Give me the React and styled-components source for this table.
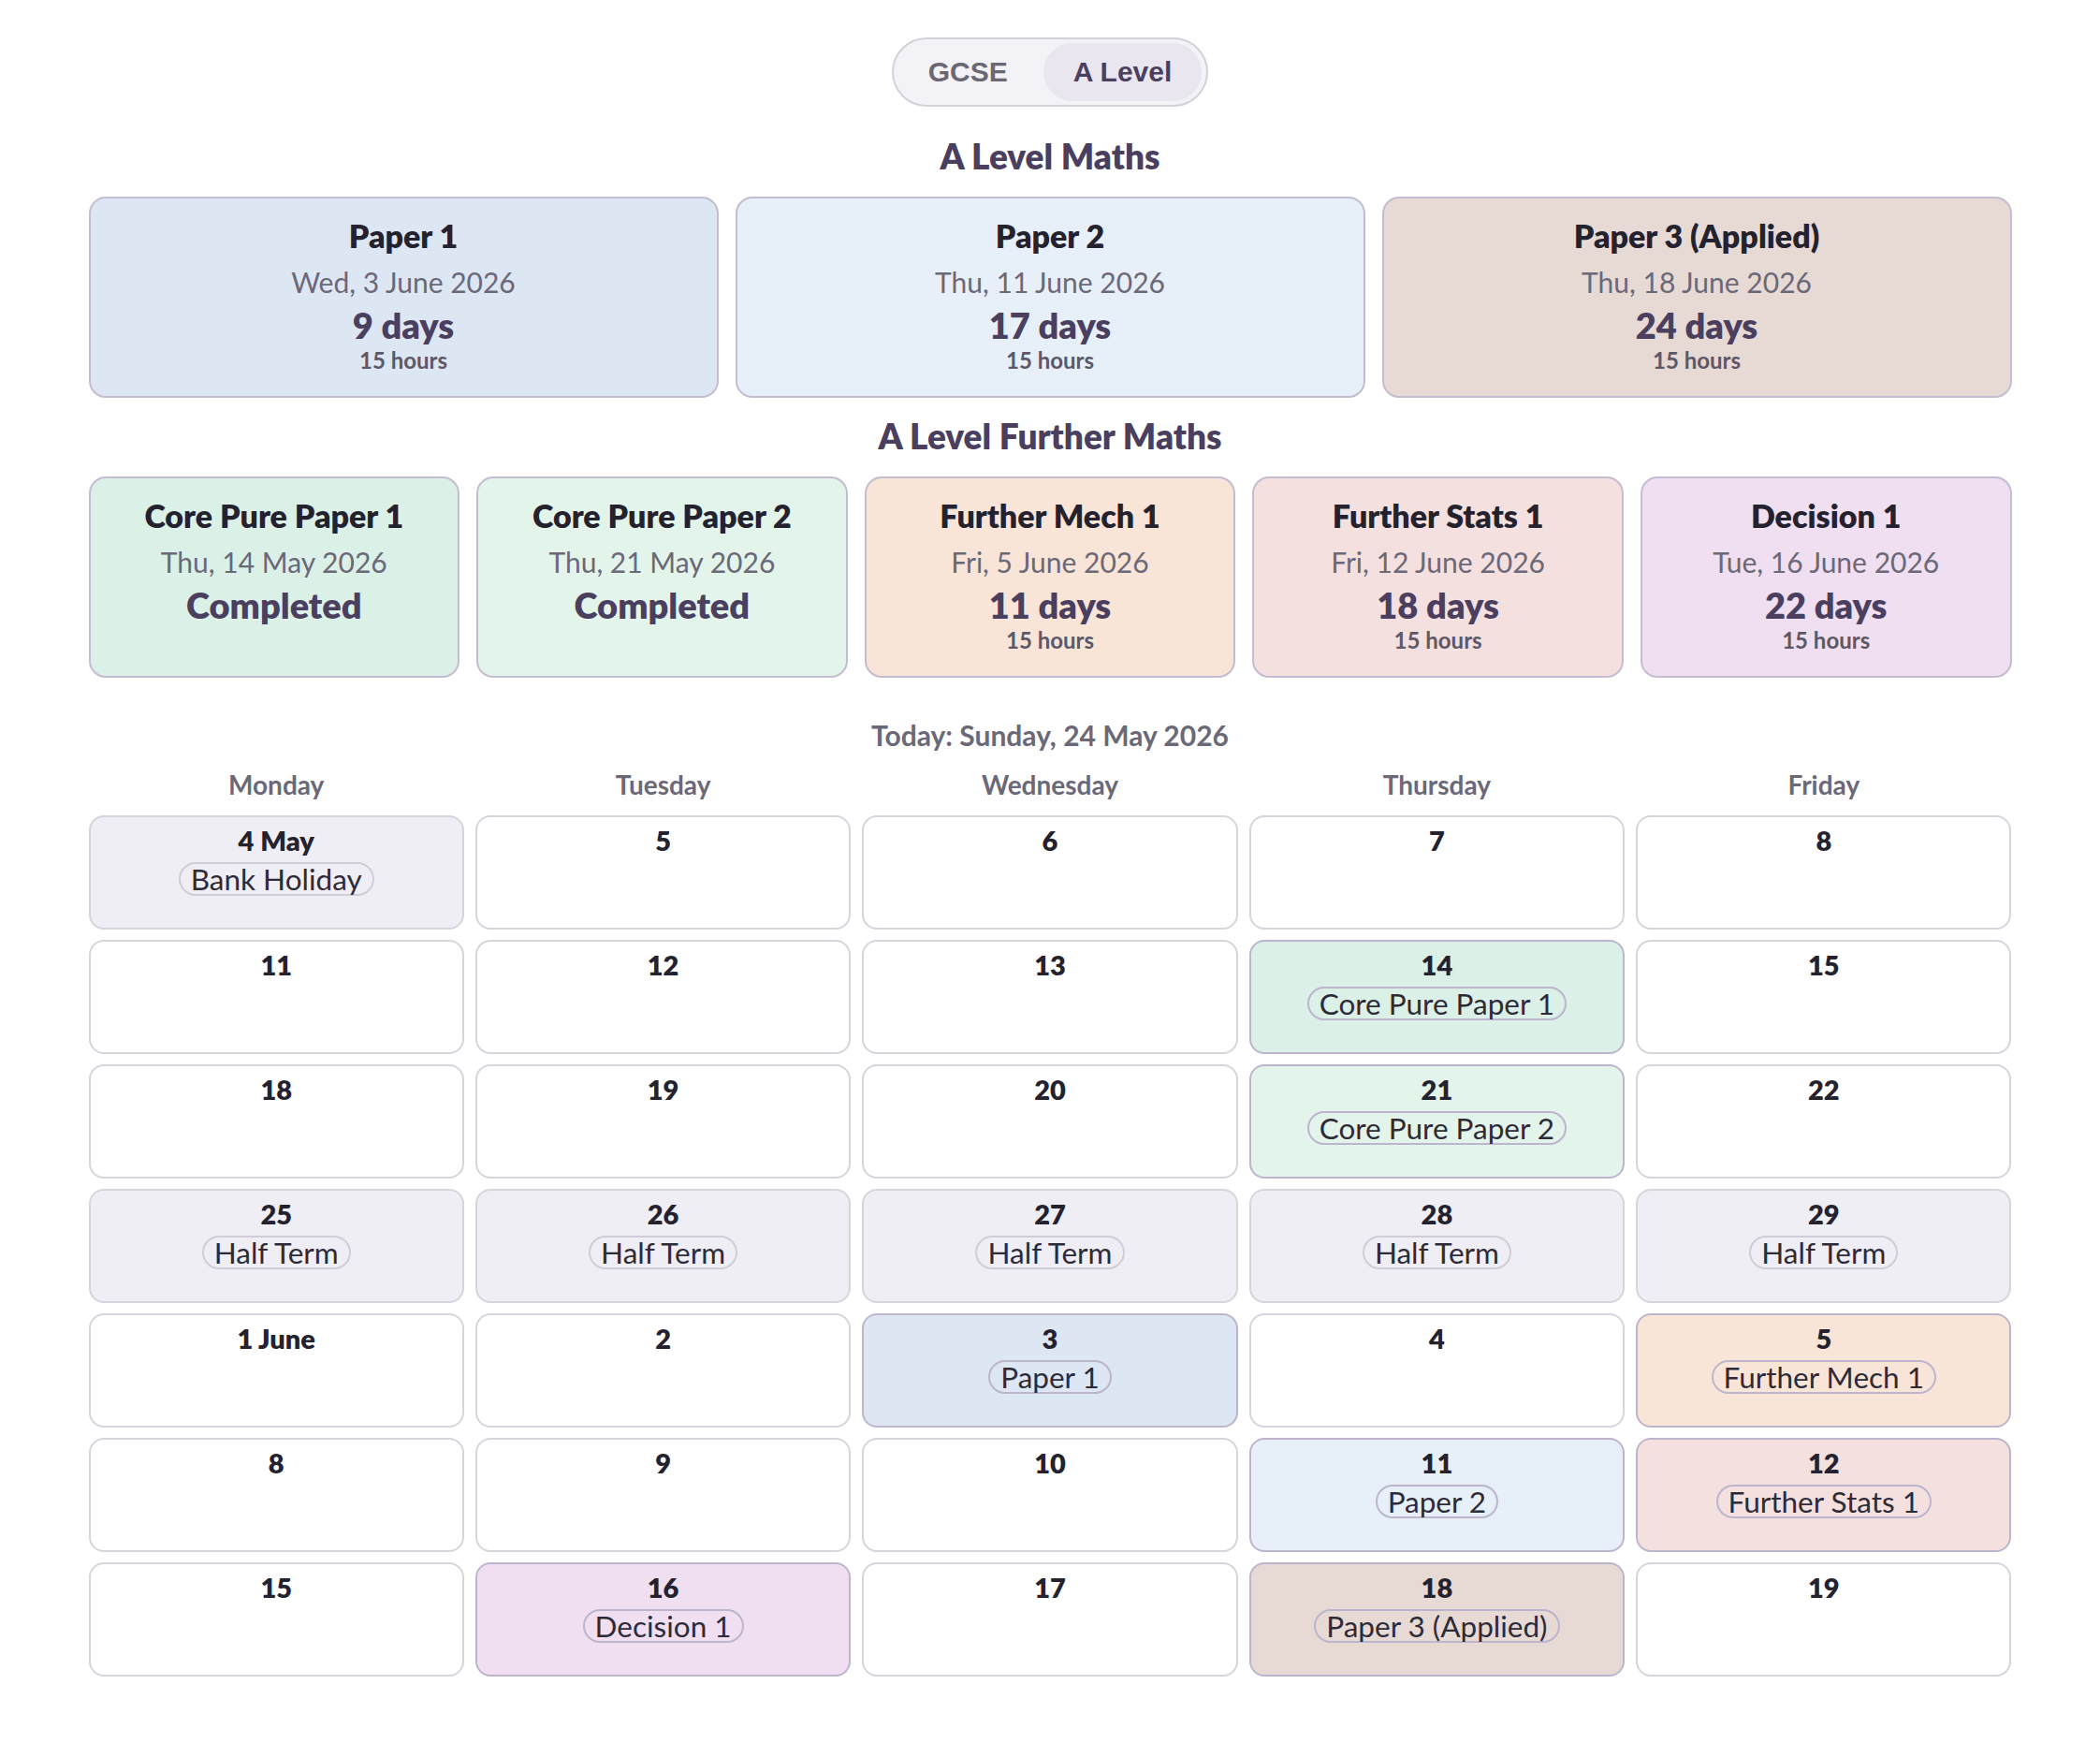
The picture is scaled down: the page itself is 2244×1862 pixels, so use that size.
import React from "react";
import styled, { createGlobalStyle } from "styled-components";

const Global = createGlobalStyle`
  html, body { margin: 0; padding: 0; background: #ffffff; }
  body { font-family: Lato, "Noto Sans", sans-serif; color: #24222e; }
`;

const Page = styled.div`
  width: 2055px;
  margin: 0 auto;
  padding-top: 40px;
  padding-bottom: 70px;
  display: flex;
  flex-direction: column;
  align-items: center;
`;

const Toggle = styled.div`
  display: flex;
  gap: 6px;
  padding: 4px 5px;
  border: 2px solid #d3d1da;
  border-radius: 999px;
  background: #f3f2f7;
`;

const ToggleButton = styled.button`
  font-family: "Liberation Sans", Arial, sans-serif;
  font-weight: 700;
  font-size: 30px;
  height: 62px;
  padding: 0 32px;
  border: none;
  border-radius: 999px;
  background: ${(p) => (p.$active ? "#e9e6f0" : "transparent")};
  color: ${(p) => (p.$active ? "#4a3f5f" : "#6a6673")};
  cursor: pointer;
`;

const Heading = styled.h2`
  margin: ${(p) => p.$mt}px 0 0;
  font-size: 37px;
  line-height: 40px;
  font-weight: 800;
  color: #4a3f5f;
  text-align: center;
`;

const CardRow = styled.div`
  width: 100%;
  margin-top: ${(p) => p.$mt}px;
  display: grid;
  grid-template-columns: repeat(${(p) => p.$cols}, 1fr);
  gap: 18px;
`;

const Card = styled.div`
  height: 215px;
  box-sizing: border-box;
  border: 2px solid #c4bdd1;
  border-radius: 18px;
  background: ${(p) => p.$bg};
  display: flex;
  flex-direction: column;
  align-items: center;
  padding-top: 20px;
`;

const CardTitle = styled.div`
  font-size: 34px;
  line-height: 40px;
  font-weight: 800;
  color: #24222e;
`;

const CardDate = styled.div`
  margin-top: 9px;
  font-size: 30px;
  line-height: 40px;
  font-weight: 400;
  color: #6b6878;
`;

const CardDays = styled.div`
  margin-top: 3px;
  font-size: 38px;
  line-height: 46px;
  font-weight: 800;
  color: #4a3f5f;
`;

const CardHours = styled.div`
  font-size: 24px;
  line-height: 29px;
  font-weight: 700;
  color: #5c5868;
`;

const Today = styled.div`
  margin-top: 44px;
  font-size: 30px;
  line-height: 34px;
  font-weight: 700;
  color: #6b6878;
`;

const Calendar = styled.div`
  width: 100%;
  margin-top: 20px;
  display: grid;
  grid-template-columns: repeat(5, 1fr);
  column-gap: 12px;
  row-gap: 11px;
`;

const Weekday = styled.div`
  text-align: center;
  font-size: 28px;
  line-height: 32px;
  font-weight: 700;
  color: #6b6878;
  margin-bottom: 6px;
`;

const Cell = styled.div`
  height: 122px;
  box-sizing: border-box;
  border: 2px solid ${(p) => (p.$exam ? "#bdb5cd" : "#d6d4dc")};
  border-radius: 16px;
  background: ${(p) => p.$bg || "#ffffff"};
  display: flex;
  flex-direction: column;
  align-items: center;
  padding-top: 9px;
`;

const DayNum = styled.div`
  font-size: 29px;
  line-height: 32px;
  font-weight: 800;
  color: #24222e;
`;

const Pill = styled.div`
  margin-top: 7px;
  height: 36px;
  box-sizing: border-box;
  display: flex;
  align-items: center;
  padding: 0 11px;
  border: 2px solid ${(p) => (p.$exam ? "#bdb5cd" : "#d0cdd8")};
  border-radius: 999px;
  font-size: 31.5px;
  font-weight: 400;
  color: #2e2b38;
  white-space: nowrap;
`;

const COLORS = {
  p1: "#dde6f3",
  p2: "#e7eff9",
  p3: "#e7d9d4",
  cp1: "#dbf0e7",
  cp2: "#e3f4eb",
  fm: "#f8e5d8",
  fs: "#f4e0df",
  d1: "#efdff1",
  hol: "#efeef4",
};

const maths = [
  { title: "Paper 1", date: "Wed, 3 June 2026", days: "9 days", bg: COLORS.p1 },
  { title: "Paper 2", date: "Thu, 11 June 2026", days: "17 days", bg: COLORS.p2 },
  { title: "Paper 3 (Applied)", date: "Thu, 18 June 2026", days: "24 days", bg: COLORS.p3 },
];

const further = [
  { title: "Core Pure Paper 1", date: "Thu, 14 May 2026", done: true, bg: COLORS.cp1 },
  { title: "Core Pure Paper 2", date: "Thu, 21 May 2026", done: true, bg: COLORS.cp2 },
  { title: "Further Mech 1", date: "Fri, 5 June 2026", days: "11 days", bg: COLORS.fm },
  { title: "Further Stats 1", date: "Fri, 12 June 2026", days: "18 days", bg: COLORS.fs },
  { title: "Decision 1", date: "Tue, 16 June 2026", days: "22 days", bg: COLORS.d1 },
];

const hol = (d, label) => ({ d, label, bg: COLORS.hol });
const ex = (d, label, bg) => ({ d, label, bg, exam: true });

const days = [
  hol("4 May", "Bank Holiday"), { d: "5" }, { d: "6" }, { d: "7" }, { d: "8" },
  { d: "11" }, { d: "12" }, { d: "13" }, ex("14", "Core Pure Paper 1", COLORS.cp1), { d: "15" },
  { d: "18" }, { d: "19" }, { d: "20" }, ex("21", "Core Pure Paper 2", COLORS.cp2), { d: "22" },
  hol("25", "Half Term"), hol("26", "Half Term"), hol("27", "Half Term"), hol("28", "Half Term"), hol("29", "Half Term"),
  { d: "1 June" }, { d: "2" }, ex("3", "Paper 1", COLORS.p1), { d: "4" }, ex("5", "Further Mech 1", COLORS.fm),
  { d: "8" }, { d: "9" }, { d: "10" }, ex("11", "Paper 2", COLORS.p2), ex("12", "Further Stats 1", COLORS.fs),
  { d: "15" }, ex("16", "Decision 1", COLORS.d1), { d: "17" }, ex("18", "Paper 3 (Applied)", COLORS.p3), { d: "19" },
];

function ExamCard({ e }) {
  return (
    <Card $bg={e.bg}>
      <CardTitle>{e.title}</CardTitle>
      <CardDate>{e.date}</CardDate>
      {e.done ? (
        <CardDays>Completed</CardDays>
      ) : (
        <>
          <CardDays>{e.days}</CardDays>
          <CardHours>15 hours</CardHours>
        </>
      )}
    </Card>
  );
}

export default function App() {
  return (
    <>
      <Global />
      <Page>
        <Toggle>
          <ToggleButton>GCSE</ToggleButton>
          <ToggleButton $active>A Level</ToggleButton>
        </Toggle>
        <Heading $mt={33}>A Level Maths</Heading>
        <CardRow $cols={3} $mt={23}>
          {maths.map((e) => (
            <ExamCard key={e.title} e={e} />
          ))}
        </CardRow>
        <Heading $mt={21}>A Level Further Maths</Heading>
        <CardRow $cols={5} $mt={23}>
          {further.map((e) => (
            <ExamCard key={e.title} e={e} />
          ))}
        </CardRow>
        <Today>Today: Sunday, 24 May 2026</Today>
        <Calendar>
          {["Monday", "Tuesday", "Wednesday", "Thursday", "Friday"].map((w) => (
            <Weekday key={w}>{w}</Weekday>
          ))}
          {days.map((c, i) => (
            <Cell key={i} $bg={c.bg} $exam={c.exam}>
              <DayNum>{c.d}</DayNum>
              {c.label && <Pill $exam={c.exam}>{c.label}</Pill>}
            </Cell>
          ))}
        </Calendar>
      </Page>
    </>
  );
}
